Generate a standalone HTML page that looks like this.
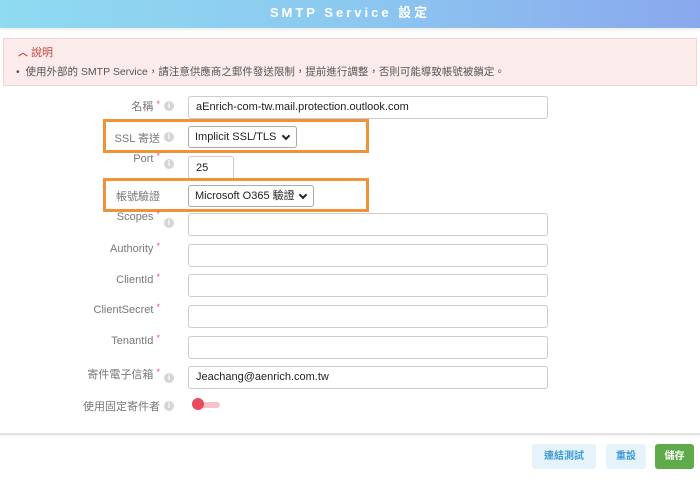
<!DOCTYPE html>
<html><head><meta charset="utf-8"><style>
*{box-sizing:border-box;margin:0;padding:0}
body{width:700px;height:500px;background:#fff;font-family:"Liberation Sans","Noto Sans CJK TC",sans-serif;position:relative;overflow:hidden}
.hdr{position:absolute;left:0;top:0;width:700px;height:28px;background:linear-gradient(90deg,#8fdbf1,#8cc8f0 50%,#8aa8ee);color:#fff;text-align:center;font-size:13px;font-weight:bold;letter-spacing:3px;line-height:25px;box-shadow:0 2px 3px rgba(0,0,0,.08)}
.alert{position:absolute;left:3px;top:38px;width:694px;height:48px;background:#fbeceb;border:1px solid #f3d3d3}
.alert .t{position:absolute;left:14px;top:5px;color:#c9453f;font-size:11px}
.alert .b{position:absolute;left:12px;top:25px;color:#555;font-size:10.5px}
.lab{position:absolute;right:540px;font-size:11px;color:#777;white-space:nowrap;text-align:right}
.lab i{color:#e55;font-style:normal;font-size:9px;position:relative;top:-3px}
.ic{position:absolute;left:164px;width:10px;height:10px;border-radius:50%;background:#d5d5d5;color:#fff;font-size:8px;font-weight:bold;text-align:center;line-height:10px;font-style:normal}
.in{position:absolute;left:188px;height:23px;border:1px solid #ccc;border-radius:3px;font-size:11px;color:#222;padding-left:7px;line-height:21px;background:#fff}
.sel{border-color:#aaa;padding-left:6px}
.sel:after{content:"";position:absolute;right:7px;top:6px;width:4px;height:4px;border-right:2px solid #222;border-bottom:2px solid #222;transform:rotate(45deg)}
.box{position:absolute;left:103px;width:266px;border:3px solid #f0923a}
.btn{position:absolute;top:444px;height:25px;font-size:10px;font-weight:bold;text-align:center;line-height:25px;border-radius:3px}
</style></head><body>
<div class="hdr">SMTP Service 設定</div>
<div class="alert"><div class="t"><b style="font-size:10px">︿</b> 說明</div><div class="b">• &nbsp;使用外部的 SMTP Service，請注意供應商之郵件發送限制，提前進行調整，否則可能導致帳號被鎖定。</div></div>

<div class="lab" style="top:98px">名稱 <i>*</i></div><span class="ic" style="top:101px">i</span>
<div class="in" style="top:96px;width:360px">aEnrich-com-tw.mail.protection.outlook.com</div>

<div class="box" style="top:119px;height:34px"></div>
<div class="lab" style="top:130px">SSL 寄送</div><span class="ic" style="top:132px">i</span>
<div class="in sel" style="top:126px;width:109px;height:22px;line-height:20px">Implicit SSL/TLS</div>

<div class="lab" style="top:153px">Port <i>*</i></div><span class="ic" style="top:159px">i</span>
<div class="in" style="top:156px;width:46px;height:24px;line-height:23px">25</div>

<div class="box" style="top:178px;height:34px"></div>
<div class="lab" style="top:188px">帳號驗證</div>
<div class="in sel" style="top:185px;width:126px;height:22px;line-height:20px">Microsoft O365 驗證</div>

<div class="lab" style="top:211px">Scopes <i>*</i></div><span class="ic" style="top:218px">i</span>
<div class="in" style="top:213px;width:360px"></div>
<div class="lab" style="top:243px">Authority <i>*</i></div>
<div class="in" style="top:244px;width:360px"></div>
<div class="lab" style="top:274px">ClientId <i>*</i></div>
<div class="in" style="top:274px;width:360px"></div>
<div class="lab" style="top:304px">ClientSecret <i>*</i></div>
<div class="in" style="top:305px;width:360px"></div>
<div class="lab" style="top:335px">TenantId <i>*</i></div>
<div class="in" style="top:336px;width:360px"></div>
<div class="lab" style="top:366px">寄件電子信箱 <i>*</i></div><span class="ic" style="top:373px">i</span>
<div class="in" style="top:366px;width:360px">Jeachang@aenrich.com.tw</div>
<div class="lab" style="top:398px">使用固定寄件者</div><span class="ic" style="top:401px">i</span>
<div style="position:absolute;left:198px;top:402px;width:22px;height:6px;border-radius:3px;background:#f6c3c8"></div>
<div style="position:absolute;left:192px;top:398px;width:12px;height:12px;border-radius:50%;background:#e94a5e"></div>

<div style="position:absolute;left:0;top:433px;width:700px;height:2px;background:#e2e2e2;box-shadow:0 1px 2px rgba(0,0,0,.08)"></div>
<div class="btn" style="left:532px;width:64px;background:#e7f3fb;color:#3d9ad6">連結測試</div>
<div class="btn" style="left:606px;width:40px;background:#e7f3fb;color:#3d9ad6">重設</div>
<div class="btn" style="left:655px;width:39px;background:#5fab4a;color:#fff">儲存</div>
</body></html>
